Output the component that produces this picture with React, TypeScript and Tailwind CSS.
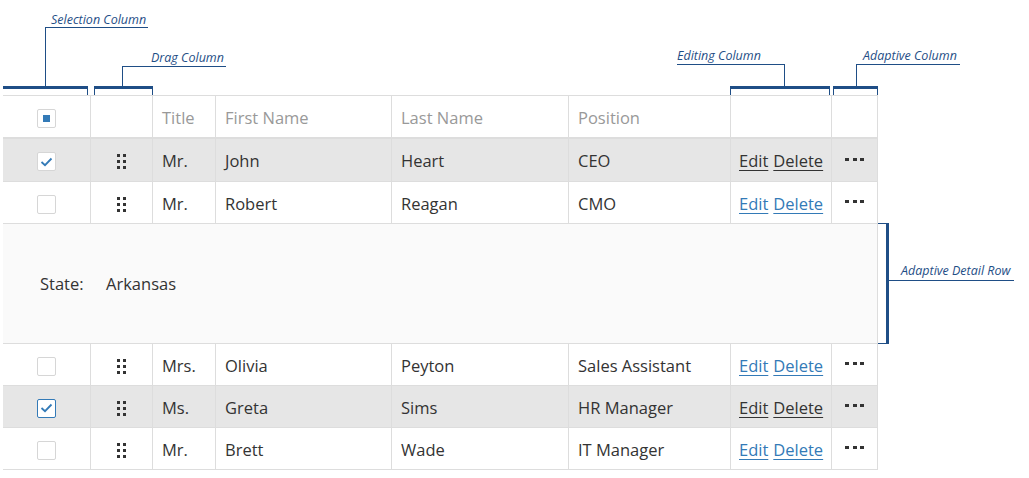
import React from 'react';

type Person = {
  title: string;
  first: string;
  last: string;
  position: string;
  checked: boolean;
  selected: boolean;
  focused?: boolean;
};

const people: Person[] = [
  { title: 'Mr.', first: 'John', last: 'Heart', position: 'CEO', checked: true, selected: true },
  { title: 'Mr.', first: 'Robert', last: 'Reagan', position: 'CMO', checked: false, selected: false },
  { title: 'Mrs.', first: 'Olivia', last: 'Peyton', position: 'Sales Assistant', checked: false, selected: false },
  { title: 'Ms.', first: 'Greta', last: 'Sims', position: 'HR Manager', checked: true, selected: true, focused: true },
  { title: 'Mr.', first: 'Brett', last: 'Wade', position: 'IT Manager', checked: false, selected: false },
];

const font = { fontFamily: '"Open Sans", "Noto Sans", sans-serif' };

function CheckBox({ state, focused }: { state: 'on' | 'off' | 'mixed'; focused?: boolean }) {
  return (
    <div
      className={
        'flex h-[19px] w-[19px] items-center justify-center rounded-[2px] border bg-white ' +
        (focused ? 'border-[#337ab7]' : 'border-[#d6d6d6]')
      }
    >
      {state === 'mixed' && <div className="h-[7px] w-[7px] bg-[#337ab7]" />}
      {state === 'on' && (
        <svg width="13" height="10" viewBox="0 0 13 10">
          <path d="M1.5 5 L5 8.2 L11.5 1.5" fill="none" stroke="#337ab7" strokeWidth="1.8" />
        </svg>
      )}
    </div>
  );
}

function DragHandle() {
  return (
    <svg width="9" height="15" viewBox="0 0 9 15" className="fill-[#333]">
      <rect x="0" y="0" width="3" height="3" />
      <rect x="6" y="0" width="3" height="3" />
      <rect x="0" y="6" width="3" height="3" />
      <rect x="6" y="6" width="3" height="3" />
      <rect x="0" y="12" width="3" height="3" />
      <rect x="6" y="12" width="3" height="3" />
    </svg>
  );
}

function MoreDots() {
  return (
    <svg width="20" height="4" viewBox="0 0 20 4" className="fill-[#333]">
      <rect x="0" y="0" width="4" height="3" />
      <rect x="8" y="0" width="4" height="3" />
      <rect x="15" y="0" width="4" height="3" />
    </svg>
  );
}

function Row({ p, first }: { p: Person; first?: boolean }) {
  const link = p.selected ? 'text-[#333] decoration-[#333]' : 'text-[#337ab7] decoration-[#337ab7]';
  return (
    <div
      className={
        'flex border-b border-[#dddddd] text-[16.5px] text-[#333] ' +
        (first ? 'h-[43px] ' : 'h-[42px] ') +
        (p.selected ? 'bg-[#e6e6e6]' : 'bg-white')
      }
    >
      <div className="flex w-[88px] items-center justify-center border-r border-[#dddddd] pt-[3px]">
        <CheckBox state={p.checked ? 'on' : 'off'} focused={p.focused} />
      </div>
      <div className="flex w-[62px] items-center justify-center border-r border-[#dddddd] pt-[3px]">
        <DragHandle />
      </div>
      <div className="flex w-[63px] items-center border-r border-[#dddddd] pt-[3px] pl-[9px]">{p.title}</div>
      <div className="flex w-[176px] items-center border-r border-[#dddddd] pt-[3px] pl-[9px]">{p.first}</div>
      <div className="flex w-[177px] items-center border-r border-[#dddddd] pt-[3px] pl-[9px]">{p.last}</div>
      <div className="flex w-[162px] items-center border-r border-[#dddddd] pt-[3px] pl-[9px]">{p.position}</div>
      <div className="flex w-[101px] items-center gap-[5px] border-r border-[#dddddd] pt-[3px] pl-[8px]">
        <span className={'underline underline-offset-[3px] ' + link}>Edit</span>
        <span className={'underline underline-offset-[3px] ' + link}>Delete</span>
      </div>
      <div className="flex w-[46px] items-center justify-center border-r border-[#dddddd] pb-[1px]">
        <MoreDots />
      </div>
    </div>
  );
}

const labelCls = 'absolute whitespace-nowrap text-[12.5px] italic leading-none text-[#1f4e86]';

export default function App() {
  return (
    <div className="relative h-[478px] w-[1029px] overflow-hidden bg-white" style={font}>
      {/* Callouts */}
      <span className={labelCls + ' left-[51px] top-[14px]'}>Selection Column</span>
      <div className="absolute left-[45px] top-[27px] h-[1px] w-[103px] bg-[#1f4e86]" />
      <div className="absolute left-[45px] top-[27px] h-[60px] w-[1px] bg-[#1f4e86]" />
      <div className="absolute left-[3px] top-[86px] h-[9px] w-[85px] border-t-[3px] border-r border-[#1f4e86]" />

      <span className={labelCls + ' left-[151px] top-[52px]'}>Drag Column</span>
      <div className="absolute left-[122px] top-[66px] h-[1px] w-[104px] bg-[#1f4e86]" />
      <div className="absolute left-[122px] top-[66px] h-[21px] w-[1px] bg-[#1f4e86]" />
      <div className="absolute left-[94px] top-[86px] h-[9px] w-[59px] border-t-[3px] border-x border-[#1f4e86]" />

      <span className={labelCls + ' left-[677px] top-[50px]'}>Editing Column</span>
      <div className="absolute left-[677px] top-[64px] h-[1px] w-[108px] bg-[#1f4e86]" />
      <div className="absolute left-[784px] top-[64px] h-[23px] w-[1px] bg-[#1f4e86]" />
      <div className="absolute left-[730px] top-[86px] h-[9px] w-[100px] border-t-[3px] border-x border-[#1f4e86]" />

      <span className={labelCls + ' left-[863px] top-[50px]'}>Adaptive Column</span>
      <div className="absolute left-[856px] top-[64px] h-[1px] w-[104px] bg-[#1f4e86]" />
      <div className="absolute left-[856px] top-[64px] h-[23px] w-[1px] bg-[#1f4e86]" />
      <div className="absolute left-[833px] top-[86px] h-[9px] w-[45px] border-t-[3px] border-x border-[#1f4e86]" />

      <span className={labelCls + ' left-[901px] top-[265px]'}>Adaptive Detail Row</span>
      <div className="absolute left-[888px] top-[280px] h-[1px] w-[126px] bg-[#1f4e86]" />
      <div className="absolute left-[878px] top-[223px] h-[121px] w-[11px] border-r-[3px] border-y border-[#1f4e86]" />

      {/* Grid */}
      <div className="pl-[3px] pt-[95px]">
        <div className="w-[875px]">
          <div className="flex h-[44px] border-t border-b-2 border-[#dddddd] text-[16.5px] text-[#999]">
            <div className="flex w-[88px] items-center justify-center border-r border-[#dddddd] pt-[3px]">
              <CheckBox state="mixed" />
            </div>
            <div className="w-[62px] border-r border-[#dddddd]" />
            <div className="flex w-[63px] items-center border-r border-[#dddddd] pt-[3px] pl-[9px]">Title</div>
            <div className="flex w-[176px] items-center border-r border-[#dddddd] pt-[3px] pl-[9px]">First Name</div>
            <div className="flex w-[177px] items-center border-r border-[#dddddd] pt-[3px] pl-[9px]">Last Name</div>
            <div className="flex w-[162px] items-center border-r border-[#dddddd] pt-[3px] pl-[9px]">Position</div>
            <div className="w-[101px] border-r border-[#dddddd]" />
            <div className="w-[46px] border-r border-[#dddddd]" />
          </div>
          <Row p={people[0]} first />
          <Row p={people[1]} />
          <div className="flex h-[120px] items-center border-b border-r border-[#dddddd] bg-[#fafafa] pt-[2px] pl-[37px] text-[16.5px] text-[#333]">
            <span className="w-[66px]">State:</span>
            <span>Arkansas</span>
          </div>
          <Row p={people[2]} />
          <Row p={people[3]} />
          <Row p={people[4]} />
        </div>
      </div>
    </div>
  );
}
